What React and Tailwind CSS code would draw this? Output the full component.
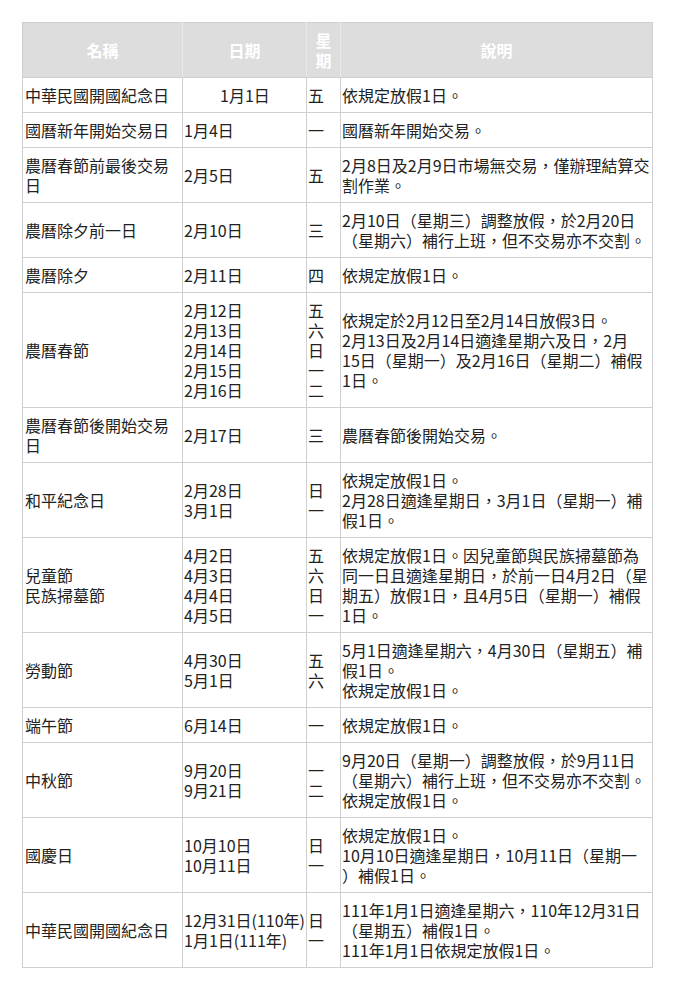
import React from "react";

const rows = [
    { name: ["中華民國開國紀念日"], date: ["1月1日"], center: true, wd: ["五"], desc: ["依規定放假1日。"] },
    { name: ["國曆新年開始交易日"], date: ["1月4日"], wd: ["一"], desc: ["國曆新年開始交易。"] },
    { name: ["農曆春節前最後交易", "日"], date: ["2月5日"], wd: ["五"], desc: ["2月8日及2月9日市場無交易，僅辦理結算交", "割作業。"] },
    { name: ["農曆除夕前一日"], date: ["2月10日"], wd: ["三"], desc: ["2月10日（星期三）調整放假，於2月20日", "（星期六）補行上班，但不交易亦不交割。"] },
    { name: ["農曆除夕"], date: ["2月11日"], wd: ["四"], desc: ["依規定放假1日。"] },
    {
        name: ["農曆春節"],
        date: ["2月12日", "2月13日", "2月14日", "2月15日", "2月16日"],
        wd: ["五", "六", "日", "一", "二"],
        desc: ["依規定於2月12日至2月14日放假3日。", "2月13日及2月14日適逢星期六及日，2月", "15日（星期一）及2月16日（星期二）補假", "1日。"]
    },
    { name: ["農曆春節後開始交易", "日"], date: ["2月17日"], wd: ["三"], desc: ["農曆春節後開始交易。"] },
    { name: ["和平紀念日"], date: ["2月28日", "3月1日"], wd: ["日", "一"], desc: ["依規定放假1日。", "2月28日適逢星期日，3月1日（星期一）補", "假1日。"] },
    {
        name: ["兒童節", "民族掃墓節"],
        date: ["4月2日", "4月3日", "4月4日", "4月5日"],
        wd: ["五", "六", "日", "一"],
        desc: ["依規定放假1日。因兒童節與民族掃墓節為", "同一日且適逢星期日，於前一日4月2日（星", "期五）放假1日，且4月5日（星期一）補假", "1日。"]
    },
    { name: ["勞動節"], date: ["4月30日", "5月1日"], wd: ["五", "六"], desc: ["5月1日適逢星期六，4月30日（星期五）補", "假1日。", "依規定放假1日。"] },
    { name: ["端午節"], date: ["6月14日"], wd: ["一"], desc: ["依規定放假1日。"] },
    { name: ["中秋節"], date: ["9月20日", "9月21日"], wd: ["一", "二"], desc: ["9月20日（星期一）調整放假，於9月11日", "（星期六）補行上班，但不交易亦不交割。", "依規定放假1日。"] },
    { name: ["國慶日"], date: ["10月10日", "10月11日"], wd: ["日", "一"], desc: ["依規定放假1日。", "10月10日適逢星期日，10月11日（星期一", "）補假1日。"] },
    {
        name: ["中華民國開國紀念日"],
        date: ["12月31日(110年)", "1月1日(111年)"],
        wd: ["日", "一"],
        desc: ["111年1月1日適逢星期六，110年12月31日", "（星期五）補假1日。", "111年1月1日依規定放假1日。"]
    }
];

function Lines({ items }) {
    return items.map((t, i) => (
        <div key={i} className="whitespace-nowrap">
            {t}
        </div>
    ));
}

export default function App() {
    return (
        <div className="min-h-screen bg-white pt-[22px] pl-[22px] font-['Noto_Sans_CJK_TC',sans-serif] text-[16px] leading-[20px] text-[#222]">
            <table className="w-[630px] table-fixed border-collapse border border-[#cfcfcf]">
                <colgroup>
                    <col className="w-[160px]" />
                    <col className="w-[124px]" />
                    <col className="w-[34px]" />
                    <col className="w-[312px]" />
                </colgroup>
                <thead>
                    <tr className="bg-[#dddddd] text-white">
                        <th className="border border-[#cfcfcf] border-r-[#e8e8e8] py-[7px] font-bold">名稱</th>
                        <th className="border border-[#cfcfcf] border-r-[#e8e8e8] py-[7px] font-bold">日期</th>
                        <th className="border border-[#cfcfcf] border-r-[#e8e8e8] px-[4px] py-[7px] font-bold">星期</th>
                        <th className="border border-[#cfcfcf] py-[7px] font-bold">說明</th>
                    </tr>
                </thead>
                <tbody>
                    {rows.map((r, i) => (
                        <tr key={i}>
                            <td className="border border-[#cfcfcf] py-[7px] pl-[2px] align-middle">
                                <Lines items={r.name} />
                            </td>
                            <td className={"border border-[#cfcfcf] py-[7px] pl-px align-middle " + (r.center ? "text-center" : "")}>
                                <Lines items={r.date} />
                            </td>
                            <td className="border border-[#cfcfcf] py-[7px] pl-px align-middle">
                                <Lines items={r.wd} />
                            </td>
                            <td className="border border-[#cfcfcf] py-[7px] pl-px align-middle">
                                <Lines items={r.desc} />
                            </td>
                        </tr>
                    ))}
                </tbody>
            </table>
        </div>
    );
}
